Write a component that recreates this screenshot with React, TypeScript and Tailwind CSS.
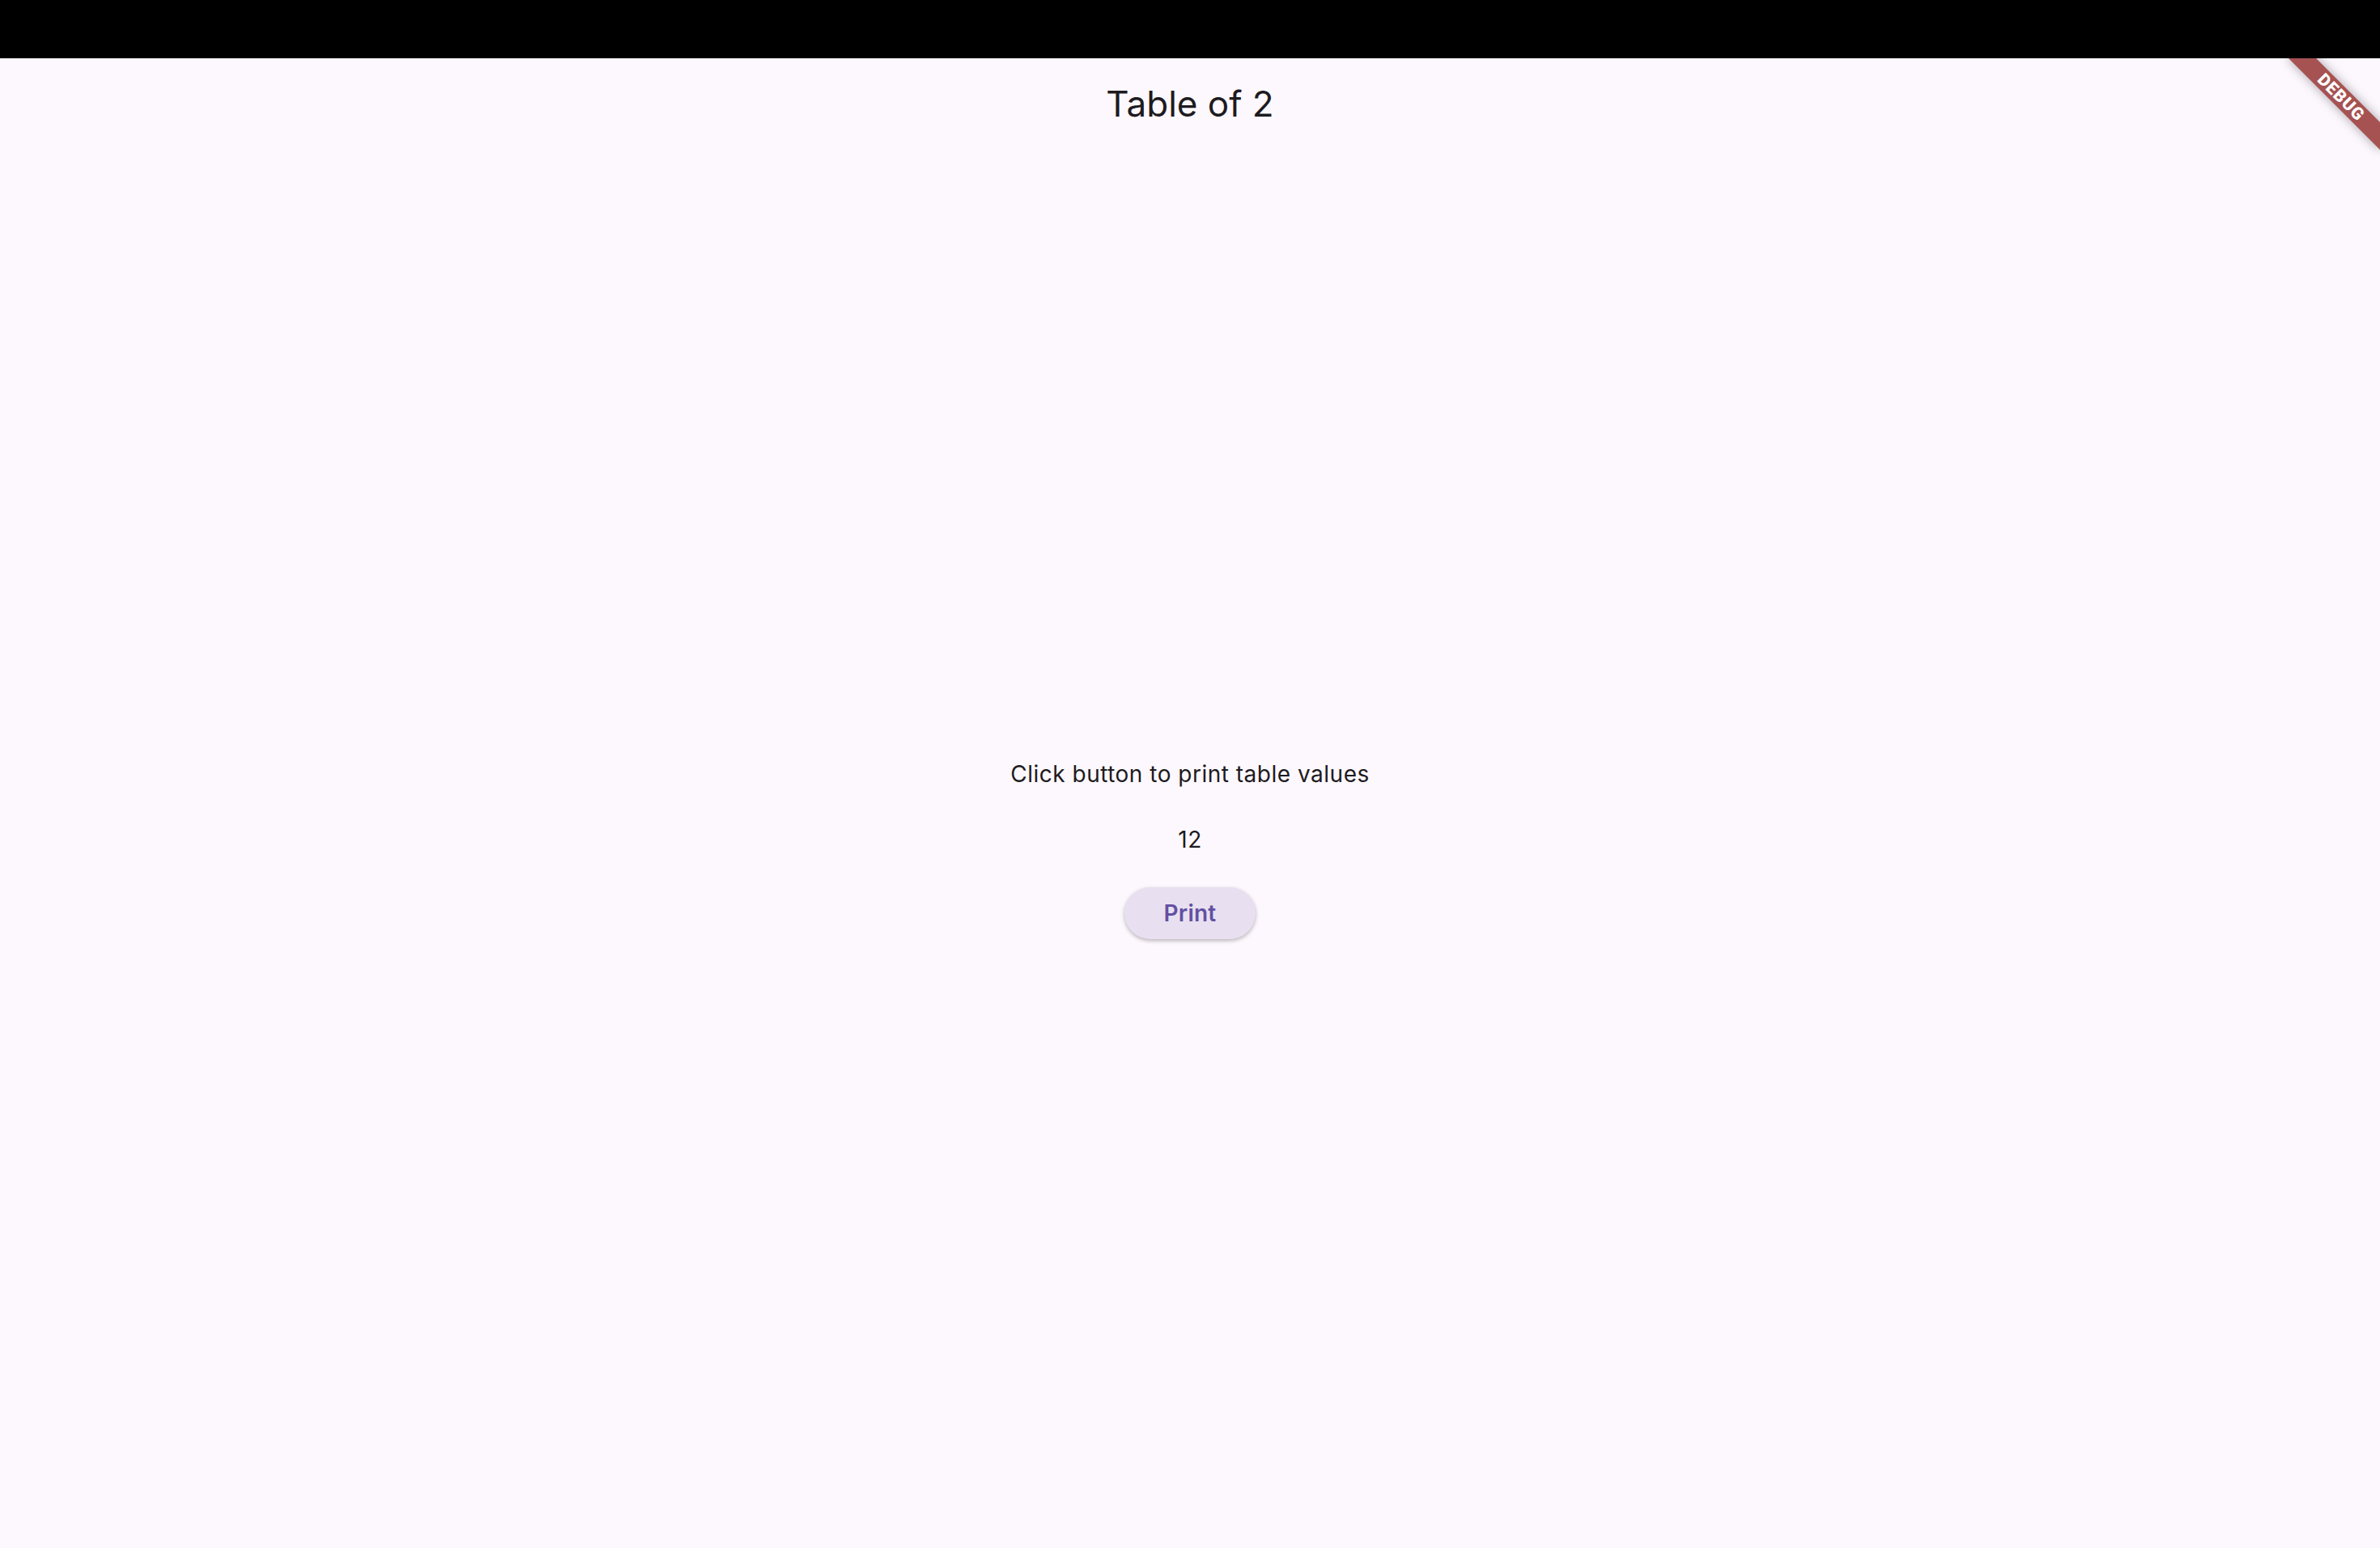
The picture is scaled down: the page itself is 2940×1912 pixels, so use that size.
import { useState } from 'react';

export default function App() {
  const [value, setValue] = useState(12);

  return (
    <div className="h-screen flex flex-col bg-[#fdf8fe] font-['Inter','Noto_Sans',sans-serif]">
      {/* window top bar */}
      <div className="h-[72px] shrink-0 bg-black" />

      <div className="relative flex-1 flex flex-col overflow-hidden">
        {/* App bar */}
        <header className="h-[112px] shrink-0 flex items-center justify-center">
          <h1 className="text-[44px] leading-[52px] text-[#1d1b20]">Table of 2</h1>
        </header>

        {/* Body */}
        <main className="flex-1 flex flex-col items-center justify-center">
          <p className="text-[28px] leading-[40px] tracking-[0.5px] text-[#1d1b20]">
            Click button to print table values
          </p>
          <p className="mt-[41px] text-[28px] leading-[40px] tracking-[0.5px] text-[#1d1b20]">
            {value}
          </p>
          <button
            onClick={() => setValue((v) => (v >= 20 ? 2 : v + 2))}
            className="mt-[39px] h-[64px] w-[162px] rounded-full bg-[#e8e0f0] text-[28px] leading-[40px] font-semibold tracking-[0.2px] text-[#6350a2] shadow-[0_2px_5px_rgba(0,0,0,0.28)]"
          >
            Print
          </button>
        </main>

        {/* Debug banner */}
        <div className="absolute top-[36px] right-[-32px] w-[160px] h-[24px] rotate-45 bg-[#a65252] shadow-[0_0_14px_rgba(0,0,0,0.35)] flex items-center justify-center">
          <span className="text-[21px] leading-[21px] font-black text-white tracking-[1px] font-['Roboto','Liberation_Sans',sans-serif]">
            DEBUG
          </span>
        </div>
      </div>
    </div>
  );
}
